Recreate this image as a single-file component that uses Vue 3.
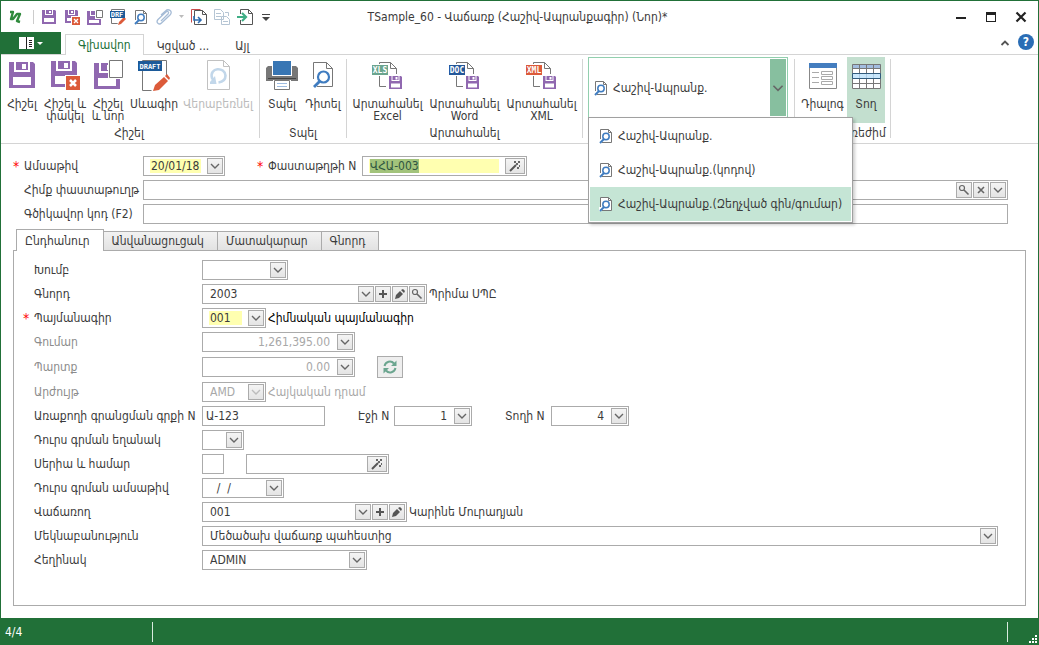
<script setup>
import { onMounted, ref } from 'vue'

const title = 'TSample_60 - Վաճառք (Հաշիվ-Ապրանքագիր) (Նոր)*'

const quickIcons = [
  { icon: 'save-s', name: 'Հիշել' },
  { icon: 'save-close-s', name: 'Հիշել և փակել' },
  { icon: 'save-new-s', name: 'Հիշել և նոր' },
  { icon: 'draft-s', name: 'Սևագիր' },
  { icon: 'preview-s', name: 'Դիտել' },
  { icon: 'clip', name: 'Կցված', arrow: true },
  { icon: 'page-out', name: 'Բացել' },
  { icon: 'page-swap', name: 'Փոխարինել', off: true },
  { icon: 'page-in', name: 'Ներմուծել' },
]

const ribbonTabs = ['Գլխավոր', 'Կցված ...', 'Այլ']

const groups = [
  {
    caption: 'Հիշել',
    buttons: [
      { icon: 'save', lines: ['Հիշել'], width: 38 },
      { icon: 'save-close', lines: ['Հիշել և', 'փակել'], width: 48 },
      { icon: 'save-new', lines: ['Հիշել', 'և նոր'], width: 38 },
      { icon: 'draft', lines: ['Սևագիր'], width: 54 },
      { icon: 'reload', lines: ['Վերաբեռնել'], width: 74, off: true },
    ],
  },
  {
    caption: 'Տպել',
    buttons: [
      { icon: 'print', lines: ['Տպել'], width: 40 },
      { icon: 'preview', lines: ['Դիտել'], width: 42 },
    ],
  },
  {
    caption: 'Արտահանել',
    buttons: [
      { icon: 'xls', lines: ['Արտահանել', 'Excel'], width: 77 },
      { icon: 'doc', lines: ['Արտահանել', 'Word'], width: 77 },
      { icon: 'xml', lines: ['Արտահանել', 'XML'], width: 77 },
    ],
  },
]

const modeButtons = [
  { icon: 'dialog', lines: ['Դիալոգ'], width: 49 },
  { icon: 'rows', lines: ['Տող'], width: 38, on: true },
]

const templates = [
  'Հաշիվ-Ապրանք.',
  'Հաշիվ-Ապրանք.(կոդով)',
  'Հաշիվ-Ապրանք.(Զեղչված գին/գումար)',
]
const currentTemplate = 2

const pageTabs = ['Ընդհանուր', 'Անվանացուցակ', 'Մատակարար', 'Գնորդ']

const rows = [
  { label: 'Խումբ', fields: [{ value: '', width: 86, buttons: ['down'] }] },
  { label: 'Գնորդ', fields: [{ value: '2003', width: 225, buttons: ['down', 'plus', 'pencil', 'find'] }], note: 'Պրիմա ՍՊԸ' },
  { label: 'Պայմանագիր', required: true, fields: [{ value: '001', width: 64, buttons: ['down'], mark: true }], note: 'Հիմնական պայմանագիր', strong: true },
  { label: 'Գումար', off: true, fields: [{ value: '1,261,395.00', width: 153, buttons: ['down'], right: true, live: true }] },
  { label: 'Պարտք', off: true, fields: [{ value: '0.00', width: 153, buttons: ['down'], right: true, live: true }], refresh: true },
  { label: 'Արժույթ', off: true, fields: [{ value: 'AMD', width: 64, buttons: ['down'] }], note: 'Հայկական դրամ' },
  {
    label: 'Առաքողի գրանցման գրքի N',
    fields: [
      { value: 'Ա-123', width: 123 },
      { label: 'Էջի N', labelWidth: 36, value: '1', width: 78, buttons: ['down'], right: true },
      { label: 'Տողի N', labelWidth: 46, value: '4', width: 78, buttons: ['down'], right: true },
    ],
  },
  { label: 'Դուրս գրման եղանակ', fields: [{ value: '', width: 42, buttons: ['down'] }] },
  { label: 'Սերիա և համար', fields: [{ value: '', width: 22 }, { name: 'Համար', value: '', width: 143, buttons: ['wand'] }] },
  { label: 'Դուրս գրման ամսաթիվ', fields: [{ value: '  /  /', width: 82, buttons: ['down'] }] },
  { label: 'Վաճառող', fields: [{ value: '001', width: 205, buttons: ['down', 'plus', 'pencil'] }], note: 'Կարինե Մուրադյան' },
  { label: 'Մեկնաբանություն', fields: [{ value: 'Մեծածախ վաճառք պահեստից', grow: true, buttons: ['down'] }] },
  { label: 'Հեղինակ', fields: [{ value: 'ADMIN', width: 165, buttons: ['down'] }] },
]

const buttonNames = { down: 'Բացել ցանկը', plus: 'Ավելացնել', pencil: 'Խմբագրել', find: 'Որոնել', wand: 'Գեներացնել', cross: 'Մաքրել' }

const docNumber = ref(null)
onMounted(() => {
  docNumber.value.focus()
  docNumber.value.select()
})
</script>

<template>
  <svg class="sprite" aria-hidden="true">
    <defs>
      <symbol id="floppy" viewBox="0 0 26 26">
        <path fill="#9068b0" fill-rule="evenodd" d="M0 0H5V10H21V0H24L26 2V26H0ZM4 15V23H22V15Z" />
        <path fill="#9068b0" fill-rule="evenodd" d="M7 0H19V8H7ZM13 2V7H17V2Z" />
      </symbol>
      <symbol id="save" viewBox="0 0 32 32"><use href="#floppy" x="3" y="2" width="26" height="26" /></symbol>
      <symbol id="save-close" viewBox="0 0 32 32">
        <use href="#floppy" x="2" y="1" width="26" height="26" />
        <path fill="#fff" d="M16 15H32V32H16Z" /><path fill="#dc5b3a" d="M17 16H31V30H17Z" />
        <path d="M21 20L27 26M27 20L21 26" stroke="#fff" stroke-width="2.500" />
      </symbol>
      <symbol id="save-new" viewBox="0 0 32 32">
        <use href="#floppy" x="2" y="3" width="26" height="26" />
        <path fill="#fff" d="M16 0H32V19H16Z" /><path fill="#fff" stroke="#777" d="M17.500 .500H30.500V17.500H17.500Z" />
      </symbol>
      <symbol id="draft" viewBox="0 0 32 32">
        <path fill="#fff" stroke="#777" d="M4.500 .500H28.500V30.500H4.500Z" />
        <path fill="#fff" d="M12 32L32 12V32Z" />
        <path fill="#dc5b3a" d="M15 31L17 25L26 17L30 21L21 30Z" /><path fill="#dc5b3a" d="M27 16L29 14L32 18L31 20Z" />
        <path fill="#1c5a99" d="M0 1H24V11H0Z" />
        <text x="12" y="9" class="tag" font-size="7">DRAFT</text>
      </symbol>
      <symbol id="reload" viewBox="0 0 32 32">
        <path fill="#fff" stroke="#bbb" d="M5.500 .500H21.500L27.500 6.500V29.500H5.500Z" /><path fill="none" stroke="#bbb" d="M21.500 .500V6.500H27.500" />
        <path fill="none" stroke="#bcd3e8" stroke-width="2.600" d="M12 21L10 18C7 7 23 6.500 23.500 15.500C23.500 20 20 22 16.500 22.500" />
        <path fill="#bcd3e8" d="M8 24V22L13 16L14.500 24Z" />
      </symbol>
      <symbol id="print" viewBox="0 0 32 32">
        <path fill="#777" d="M2 6H30L32 8V21H0V8Z" /><path fill="#fff" d="M6 1H26V16H6Z" /><path fill="#3876b4" d="M7 1H25V15H7Z" />
        <path fill="#444" d="M2 18H30V19H2Z" /><path fill="#fff" d="M7 20H25V31H7Z" />
        <path fill="#fff" stroke="#777" d="M8.500 20.500H23.500V29.500H8.500Z" /><path stroke="#9dbbe0" d="M11 23.500H21M11 26.500H21" />
      </symbol>
      <symbol id="preview" viewBox="0 0 32 32">
        <path fill="#fff" stroke="#777" d="M6.500 2.500H19.500L25.500 8.500V26.500H6.500Z" /><path fill="none" stroke="#777" d="M19.500 2.500V8.500H25.500" />
        <path fill="#fff" d="M5 19H10V28H5Z" />
        <circle cx="16.500" cy="17" r="5.500" fill="#fff" stroke="#3f7cc0" stroke-width="2.200" /><path d="M12.500 21.500L7 27" stroke="#3f7cc0" stroke-width="2.800" />
      </symbol>
      <symbol id="export-page" viewBox="0 0 32 32">
        <path fill="#fff" stroke="#777" d="M7.500 2.500H18.500L24.500 8.500V26.500H7.500Z" /><path fill="none" stroke="#777" d="M18.500 2.500V8.500H24.500" />
        <path fill="#fff" d="M14 14H31V31H14Z" /><use href="#floppy" x="17" y="16" width="13" height="13" />
        <path fill="#fff" d="M0 4H17V16H0Z" />
      </symbol>
      <symbol id="xls" viewBox="0 0 32 32"><use href="#export-page" /><path fill="#6ba58f" d="M0 5H16V15H0Z" /><text x="8" y="13" class="tag" font-size="8">XLS</text></symbol>
      <symbol id="doc" viewBox="0 0 32 32"><use href="#export-page" /><path fill="#24589a" d="M0 5H16V15H0Z" /><text x="8" y="13" class="tag" font-size="8">DOC</text></symbol>
      <symbol id="xml" viewBox="0 0 32 32"><use href="#export-page" /><path fill="#dc5b3a" d="M0 5H16V15H0Z" /><text x="8" y="13" class="tag" font-size="8">XML</text></symbol>
      <symbol id="dialog" viewBox="0 0 32 32">
        <path fill="#fff" stroke="#888" d="M2.500 3.500H29.500V28.500H2.500Z" /><path fill="#447dbf" d="M2 3H30V8H2Z" />
        <path fill="#fff" stroke="#aaa" d="M5 12.500H12M5 17.500H12M5 22.500H12M14.500 11.500H25.500V14.500H14.500ZM14.500 16.500H25.500V19.500H14.500ZM14.500 21.500H25.500V24.500H14.500Z" />
      </symbol>
      <symbol id="rows" viewBox="0 0 32 32">
        <path fill="#fff" d="M2 4H31V29H2Z" /><path fill="#a3bddf" d="M2 4H31V9H2Z" />
        <path fill="none" stroke="#777" d="M2.500 4.500H30.500V28.500H2.500ZM2.500 8.500H30.500M2.500 13.500H30.500M2.500 18.500H30.500M2.500 23.500H30.500M9.500 4.500V28.500M16.500 4.500V28.500M23.500 4.500V28.500" />
        <path fill="#c9e7fb" stroke="#315b7c" d="M2.500 13.500H30.500V18.500H2.500Z" /><path stroke="#abcbe5" d="M9.500 14V18M16.500 14V18M23.500 14V18" />
      </symbol>
      <symbol id="save-s" viewBox="0 0 16 16">
        <path fill="#9068b0" fill-rule="evenodd" d="M1 1H4V6H12V1H14L15 2V15H1ZM3 9V13H13V9ZM5 1H11V5H5ZM8 2V4H10V2Z" />
      </symbol>
      <symbol id="save-close-s" viewBox="0 0 16 16">
        <path fill="#9068b0" fill-rule="evenodd" d="M1 1H4V6H11V1H13L14 2V14H1ZM3 9V12H12V9ZM5 1H10V5H5ZM7 2V4H9V2Z" />
        <path fill="#fff" d="M7 7H16V16H7Z" /><path fill="#dc5b3a" d="M8 8H16V16H8Z" />
        <path d="M10 10L14 14M14 10L10 14" stroke="#fff" stroke-width="1.300" />
      </symbol>
      <symbol id="save-new-s" viewBox="0 0 16 16">
        <path fill="#9068b0" fill-rule="evenodd" d="M0 2H3V7H14V16H0ZM2 11V14H12V11ZM4 2H8V6H4Z" />
        <path fill="#fff" d="M8 0H16V10H8Z" /><path fill="#fff" stroke="#777" d="M9.500 1.500H15.500V8.500H9.500Z" />
      </symbol>
      <symbol id="draft-s" viewBox="0 0 16 16">
        <path fill="#fff" stroke="#777" d="M1.500 .500H14.500V14.500H1.500Z" /><path fill="#fff" d="M6 16L16 7V16Z" />
        <path fill="#dc5b3a" d="M8 16L9 13L14 8L16 10L11 15Z" /><path fill="#1c5a99" d="M0 2H15V9H0Z" /><text x="7" y="8" class="tag" font-size="7">DRF</text>
      </symbol>
      <symbol id="preview-s" viewBox="0 0 16 16">
        <path fill="#fff" stroke="#777" d="M2.500 1.500H10.500L13.500 4.500V14.500H2.500Z" /><path fill="none" stroke="#777" d="M10.500 1.500V4.500H13.500" /><path fill="#fff" d="M1 11H4V15H1Z" />
        <circle cx="8" cy="8.500" r="3.200" fill="#fff" stroke="#3f7cc0" stroke-width="1.500" /><path d="M6 11L2 15" stroke="#3f7cc0" stroke-width="2" />
      </symbol>
      <symbol id="clip" viewBox="0 0 16 16">
        <path fill="none" stroke="#a6bcd6" stroke-width="1.300" d="M5 12L12 5C13.500 3 11.500 1.500 10 3L2 10.500C-.5 13.500 3 16.500 5.500 14L14 6C17.500 2.500 12.500-1 9.500 2L5 6" />
      </symbol>
      <symbol id="page-out" viewBox="0 0 16 16">
        <path fill="none" stroke="#c94b4b" d="M.500 13.500V.500H9.500" /><path fill="#fff" stroke="#555" d="M3.500 1.500H11.500L15.500 5.500V15.500H3.500Z" /><path fill="none" stroke="#555" d="M11.500 1.500V5.500H15.500" />
        <path fill="none" stroke="#2f6cb0" stroke-width="1.600" d="M3 7V11H10M7 8L10 11L7 14" />
      </symbol>
      <symbol id="page-swap" viewBox="0 0 16 16">
        <path fill="#fff" stroke="#aebfd0" d="M.500 .500H6.500L9.500 3.500V10.500H.500ZM7.500 7.500H12.500L15.500 10.500V15.500H7.500ZM2 4.500H7M2 7.500H7M9 12.500H14" /><path fill="none" stroke="#aebfd0" d="M11 3.500H14.500V7" />
      </symbol>
      <symbol id="page-in" viewBox="0 0 16 16">
        <path fill="#fff" stroke="#555" d="M3.500 .500H11.500L15.500 4.500V15.500H3.500Z" /><path fill="none" stroke="#555" d="M11.500 .500V4.500H15.500" /><path fill="#fff" d="M2 5H5V11H2Z" />
        <path fill="none" stroke="#3fae85" stroke-width="2.200" d="M0 8H8M5 4L9 8L5 12" />
      </symbol>
      <symbol id="down" viewBox="0 0 14 14"><path fill="none" stroke="#666" stroke-width="1.400" d="M3 5L7 9L11 5" /></symbol>
      <symbol id="plus" viewBox="0 0 14 14"><path stroke="#555" stroke-width="2" d="M3 7H11M7 3V11" /></symbol>
      <symbol id="cross" viewBox="0 0 14 14"><path stroke="#666" stroke-width="1.600" d="M4 4L10 10M10 4L4 10" /></symbol>
      <symbol id="pencil" viewBox="0 0 14 14"><path fill="#555" d="M2 12L3 8L7 4L10 7L6 11ZM8 3L10 2L12 4L11 6Z" /></symbol>
      <symbol id="find" viewBox="0 0 14 14"><circle cx="5" cy="5" r="2.500" fill="none" stroke="#666" stroke-width="1.200" /><path stroke="#666" stroke-width="1.600" d="M7 7L11.500 11.500" /></symbol>
      <symbol id="wand" viewBox="0 0 14 14">
        <path stroke="#555" stroke-width="2" d="M2 12L8 6" /><path fill="#666" d="M6 2H8V4H6ZM10 2H12V4H10ZM11 6H12V8H11ZM9 8H11V10H9ZM8 4H10V6H8Z" />
      </symbol>
    </defs>
  </svg>

  <div class="window">
    <header class="titlebar">
      <div class="quick">
        <svg class="logo" viewBox="0 0 14 16"><path fill="none" stroke="#2f8a3c" stroke-width="2.400" stroke-linejoin="round" d="M2 3H5L3 10H5L9 5H12L9 12L12 13" /></svg>
        <span class="rule"></span>
        <template v-for="q in quickIcons" :key="q.icon">
          <button type="button" class="bare" :class="{ faint: q.off }" :aria-label="q.name"><svg width="16" height="16"><use :href="'#' + q.icon" /></svg></button>
          <svg v-if="q.arrow" class="tiny" viewBox="0 0 5 4"><path fill="#bbb" d="M0 0H5L2.500 3Z" /></svg>
        </template>
        <button type="button" class="bare" aria-label="Կարգավորել"><svg width="16" height="16" viewBox="0 0 16 16"><path fill="#444" d="M2 5H10V6H2ZM2 8H10L6 12Z" /></svg></button>
      </div>
      <h1>{{ title }}</h1>
      <div class="controls">
        <button type="button" class="bare" aria-label="Ծալել"><svg width="12" height="12"><path fill="#222" d="M1 6H11V8H1Z" /></svg></button>
        <button type="button" class="bare" aria-label="Մեծացնել"><svg width="12" height="12"><path fill="#222" fill-rule="evenodd" d="M1 1H11V11H1ZM2 4V10H10V4Z" /></svg></button>
        <button type="button" class="bare" aria-label="Փակել"><svg width="12" height="12"><path stroke="#222" stroke-width="2.200" d="M1.500 1.500L10.500 10.500M10.500 1.500L1.500 10.500" /></svg></button>
      </div>
    </header>

    <nav class="ribbon-tabs">
      <button type="button" class="file" aria-label="Մենյու">
        <svg width="24" height="14" viewBox="0 0 24 14">
          <path fill="#fff" d="M0 1H15V13H0Z" /><path stroke="#222" d="M7.500 1V13M10 4.500H13M10 6.500H13M10 8.500H13M10 10.500H13" /><path fill="#fff" d="M18 6H24L21 9Z" />
        </svg>
      </button>
      <button v-for="(t, i) in ribbonTabs" :key="t" type="button" class="ribbon-tab" :class="{ active: i === 0 }">{{ t }}</button>
      <div class="help">
        <button type="button" class="bare" aria-label="Թաքցնել"><svg width="10" height="10"><path fill="none" stroke="#555" stroke-width="1.800" d="M1.500 8L5 4.500L8.500 8" /></svg></button>
        <button type="button" class="question">?</button>
      </div>
    </nav>

    <section class="ribbon">
      <div v-for="g in groups" :key="g.caption" class="group">
        <div class="group-buttons">
          <button v-for="b in g.buttons" :key="b.icon" type="button" class="big" :class="{ faint: b.off }" :style="{ width: b.width + 'px' }">
            <svg width="32" height="32"><use :href="'#' + b.icon" /></svg>
            <span v-for="l in b.lines" :key="l">{{ l }}</span>
          </button>
        </div>
        <div class="caption">{{ g.caption }}</div>
      </div>

      <div class="group picker-group">
        <button type="button" class="picker">
          <svg width="16" height="16"><use href="#preview-s" /></svg>
          <span>{{ templates[0] }}</span>
          <i><svg width="16" height="16"><use href="#down" /></svg></i>
        </button>
        <div class="menu" role="menu">
          <button v-for="(t, i) in templates" :key="t" type="button" role="menuitem" :class="{ current: i === currentTemplate }">
            <svg width="16" height="16"><use href="#preview-s" /></svg>{{ t }}
          </button>
        </div>
      </div>

      <div class="group mode">
        <div class="group-buttons">
          <button v-for="b in modeButtons" :key="b.icon" type="button" class="big" :class="{ on: b.on }" :style="{ width: b.width + 'px' }">
            <svg width="32" height="32"><use :href="'#' + b.icon" /></svg>
            <span v-for="l in b.lines" :key="l">{{ l }}</span>
          </button>
        </div>
        <div class="caption">Դիտման ռեժիմ</div>
      </div>
    </section>

    <main>
      <div class="head">
        <div class="row">
          <b class="star">*</b><label for="date" class="head-label">Ամսաթիվ</label>
          <div class="field date">
            <input id="date" class="mark" type="text" value="20/01/18" />
            <button type="button" :aria-label="buttonNames.down"><svg width="14" height="14"><use href="#down" /></svg></button>
          </div>
          <div class="number-label"><b class="star">*</b><label for="number">Փաստաթղթի N</label></div>
          <div class="field number">
            <input id="number" ref="docNumber" class="mark" type="text" value="ՎՀԱ-003" />
            <button type="button" class="wide" :aria-label="buttonNames.wand"><svg width="14" height="14"><use href="#wand" /></svg></button>
          </div>
        </div>
        <div class="row">
          <b class="star"></b><label for="base" class="head-label">Հիմք փաստաթուղթ</label>
          <div class="field grow">
            <input id="base" type="text" value="" />
            <button v-for="b in ['find', 'cross', 'down']" :key="b" type="button" :aria-label="buttonNames[b]"><svg width="14" height="14"><use :href="'#' + b" /></svg></button>
          </div>
        </div>
        <div class="row">
          <b class="star"></b><label for="barcode" class="head-label">Գծիկավոր կոդ (F2)</label>
          <div class="field grow"><input id="barcode" type="text" value="" /></div>
        </div>
      </div>

      <div class="page-tabs" role="tablist">
        <button v-for="(t, i) in pageTabs" :key="t" type="button" role="tab" :aria-selected="i === 0" :class="{ active: i === 0 }">{{ t }}</button>
      </div>

      <div class="panel" role="tabpanel">
        <div v-for="(r, ri) in rows" :key="r.label" class="row" :class="{ off: r.off }">
          <b class="star">{{ r.required ? '*' : '' }}</b>
          <label :for="'f' + ri + '-0'" class="row-label">{{ r.label }}</label>
          <template v-for="(f, fi) in r.fields" :key="fi">
            <label v-if="f.label" class="inner-label" :for="'f' + ri + '-' + fi" :style="{ width: f.labelWidth + 'px' }">{{ f.label }}</label>
            <div class="field" :class="{ grow: f.grow, plain: !f.buttons, apart: fi > 0 && !f.label }" :style="f.width ? { width: f.width + 'px' } : null">
              <input :id="'f' + ri + '-' + fi" type="text" :value="f.value" :disabled="r.off" :aria-label="f.name" :class="{ mark: f.mark, right: f.right }" />
              <button
                v-for="b in f.buttons" :key="b" type="button" :class="{ wide: b === 'wand' }"
                :disabled="r.off && !f.live" :aria-label="buttonNames[b]"
              ><svg width="14" height="14"><use :href="'#' + b" /></svg></button>
            </div>
          </template>
          <span v-if="r.note" class="note" :class="{ strong: r.strong }">{{ r.note }}</span>
          <button v-if="r.refresh" type="button" class="refresh" aria-label="Թարմացնել">
            <svg width="16" height="16" viewBox="0 0 16 16">
              <path fill="none" stroke="#6ba58f" stroke-width="2" d="M2.500 7C3.500 2.500 9 1 12 4.500M13.500 9C12.500 13.500 7 15 4 11.500" />
              <path fill="#6ba58f" d="M14.500 1.500V7H9ZM1.500 14.500V9H7Z" />
            </svg>
          </button>
        </div>
      </div>
    </main>

    <footer>
      <span class="count">4/4</span>
      <span class="status"></span>
      <svg width="9" height="9" class="grip"><path fill="#fff" d="M6 0H8V2H6ZM3 3H5V5H3ZM6 3H8V5H6ZM0 6H2V8H0ZM3 6H5V8H3ZM6 6H8V8H6Z" /></svg>
    </footer>
  </div>
</template>

<style>
body {
  background: #fff;
}
</style>

<style scoped>
.sprite {
  position: absolute;
  width: 0;
  height: 0;
}
.tag {
  fill: #fff;
  font-family: "DejaVu Sans Mono", "Liberation Mono", monospace;
  font-weight: 700;
  text-anchor: middle;
}
.window,
.window button,
.window input {
  font-family: "DejaVu Sans Condensed", "DejaVu Sans", sans-serif;
  font-size: 12px;
  color: #3b3b3b;
}
.window {
  display: flex;
  flex-direction: column;
  box-sizing: border-box;
  min-height: 100vh;
  border: 1px solid #217038;
  border-bottom: 0;
  background: #fff;
  white-space: nowrap;
}
.window * {
  box-sizing: border-box;
}
.window button {
  padding: 0;
  margin: 0;
  cursor: pointer;
}
svg {
  display: block;
  flex: none;
}
.bare {
  border: 0;
  background: none;
}
.faint {
  opacity: 0.9;
}

.titlebar {
  display: grid;
  grid-template-columns: 1fr auto 1fr;
  align-items: center;
  height: 31px;
  padding: 0 11px 0 7px;
}
.logo {
  width: 14px;
  height: 16px;
}
.rule {
  width: 1px;
  height: 14px;
  margin: 0 0 0 4px;
  background: #ccc;
}
.quick {
  display: flex;
  align-items: center;
  gap: 7px;
}
.tiny {
  width: 5px;
  height: 4px;
}
h1 {
  margin: 0;
  font-size: 12px;
  font-weight: 400;
}
.controls {
  display: flex;
  justify-content: flex-end;
  gap: 18px;
}

.ribbon-tabs {
  display: flex;
  height: 23px;
  border-bottom: 1px solid #d4d4d4;
}
.window .file {
  display: flex;
  align-items: center;
  justify-content: center;
  width: 60px;
  height: 22px;
  margin-right: 4px;
  border: 0;
  background: #217038;
}
.window .ribbon-tab {
  height: 20px;
  margin-top: 3px;
  padding: 0 12px;
  border: 1px solid transparent;
  border-bottom: 0;
  background: none;
}
.window .ribbon-tab.active {
  height: 21px;
  margin-top: 2px;
  border-color: #d4d4d4;
  background: #fff;
  color: #217038;
}
.help {
  display: flex;
  align-items: center;
  gap: 8px;
  height: 20px;
  margin-left: auto;
  padding-right: 4px;
}
.window .question {
  width: 16px;
  height: 16px;
  border: 0;
  border-radius: 8px;
  background: #2a6db5;
  color: #fff;
  font-weight: 700;
  line-height: 16px;
}

.ribbon {
  display: flex;
  height: 89px;
  border-bottom: 1px solid #d4d4d4;
}
.group {
  position: relative;
  display: flex;
  flex-direction: column;
  padding: 2px 3px 0 2px;
}
.group:first-child {
  padding-right: 5px;
}
.group::after {
  content: "";
  position: absolute;
  top: 4px;
  right: 0;
  bottom: 5px;
  width: 1px;
  background: #d4d4d4;
}
.group-buttons {
  display: flex;
  height: 68px;
}
.big {
  display: flex;
  flex-direction: column;
  align-items: center;
  padding: 0;
  border: 0;
  background: none;
  line-height: 12px;
}
.window .big {
  padding-top: 3px;
}
.big svg {
  margin-bottom: 6px;
}
.window .big.faint {
  color: #b4b4b4;
}
.window .big.on {
  background: #c3dfcf;
}
.caption {
  line-height: 20px;
  text-align: center;
}
.group.picker-group {
  padding: 2px 7px 0 5px;
}
.window .picker {
  display: flex;
  align-items: center;
  gap: 4px;
  width: 200px;
  height: 61px;
  padding: 1px 1px 1px 4px;
  border: 1px solid #92cfae;
  background: #fff;
}
.picker i {
  display: flex;
  align-items: center;
  height: 100%;
  margin-left: auto;
  background: #87bf9f;
}
.menu {
  position: absolute;
  z-index: 5;
  top: 62px;
  left: 5px;
  width: 265px;
  padding: 1px;
  border: 1px solid #a0a0a0;
  background: #fff;
  box-shadow: 2px 2px 3px rgba(0, 0, 0, 0.2);
}
.window .menu button {
  display: flex;
  align-items: center;
  gap: 4px;
  width: 100%;
  height: 34px;
  padding-left: 8px;
  border: 0;
  background: none;
}
.window .menu button.current {
  background: #c5e5d5;
}
.group.mode {
  padding: 2px 5px 0 3px;
}

main {
  display: flex;
  flex: 1;
  flex-direction: column;
  padding: 12px;
}
.row {
  display: flex;
  align-items: center;
}
.head {
  display: flex;
  flex-direction: column;
  gap: 4px;
  padding-right: 18px;
}
.star {
  flex: none;
  width: 11px;
  color: #f00;
  font-weight: 400;
  font-size: 14px;
  line-height: 14px;
}
.head-label {
  width: 119px;
}
.head .field.date {
  width: 82px;
  margin-right: 32px;
}
.number-label {
  display: flex;
  align-items: center;
  width: 105px;
}
.number {
  width: 165px;
}
.field {
  display: flex;
  flex: none;
  align-items: center;
  gap: 1px;
  height: 20px;
  padding: 1px 1px 1px 6px;
  border: 1px solid #ababab;
  background: #fff;
}
.field.grow {
  flex: 1;
}
.field.plain {
  padding: 1px 2px;
}
.field.apart {
  margin-left: 22px;
}
.field input {
  flex: 1;
  min-width: 0;
  height: 14px;
  margin-right: 5px;
  padding: 0 1px;
  border: 0;
  outline: 0;
  background: none;
  line-height: 14px;
}
.field.plain input {
  margin-right: 0;
}
.field input.mark {
  background: #ffffb0;
}
.field input.right {
  text-align: right;
}
.field input::selection {
  background: #a2c37b;
  color: #2f5540;
}
.window input:disabled {
  color: #a8a8a8;
}
.field button {
  display: flex;
  align-items: center;
  justify-content: center;
  width: 16px;
  height: 16px;
  border: 1px solid #ababab;
  background: linear-gradient(#f4f4f4, #e4e4e4);
}
.window .field .wide {
  width: 20px;
}
.field button:disabled svg {
  opacity: 0.35;
}

.page-tabs {
  position: relative;
  display: flex;
  align-items: flex-end;
  height: 22px;
  margin: 5px 0 -1px 3px;
}
.window .page-tabs button {
  height: 20px;
  margin-right: -1px;
  padding: 0 13px 0 8px;
  border: 1px solid #ababab;
  background: linear-gradient(#f2f2f2, #e2e2e2);
}
.window .page-tabs button.active {
  height: 22px;
  border-bottom: 0;
  background: #fff;
}
.panel {
  display: flex;
  flex: 1;
  flex-direction: column;
  gap: 4px;
  padding: 9px 27px 9px 9px;
  border: 1px solid #ababab;
}
.row-label {
  width: 168px;
}
.off label {
  color: #8c8c8c;
}
.inner-label {
  margin-left: 33px;
}
.note {
  margin-left: 2px;
}
.note.strong {
  color: #000;
}
.off .note {
  color: #a8a8a8;
}
.window .refresh {
  display: flex;
  align-items: center;
  justify-content: center;
  width: 26px;
  height: 22px;
  margin-left: 22px;
  border: 1px solid #ababab;
  background: #eee;
}

footer {
  position: relative;
  display: flex;
  align-items: center;
  height: 27px;
  background: #217038;
  color: #fff;
}
.count {
  width: 151px;
  padding-left: 4px;
}
.status {
  flex: 1;
  height: 20px;
  margin-right: 30px;
  border: solid #d9ebdf;
  border-width: 0 1px;
}
.grip {
  position: absolute;
  right: 0;
  bottom: 1px;
}
</style>
